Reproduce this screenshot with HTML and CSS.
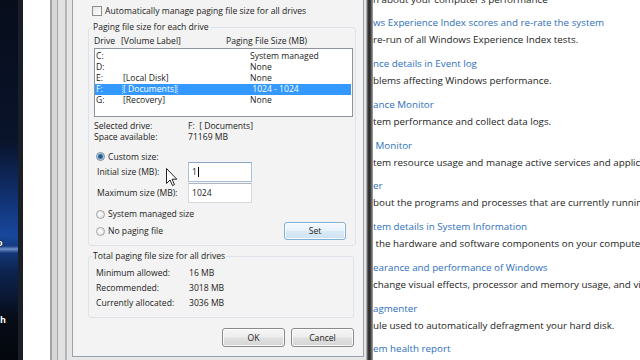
FILE: index.html
```html
<!DOCTYPE html>
<html lang="en">
<head>
    <meta charset="UTF-8">
    <meta name="viewport" content="width=device-width, initial-scale=1.0">
    <title>Virtual Memory</title>
    <link rel="stylesheet" href="styles.css">
</head>
<body>
    <!-- desktop wallpaper with cut-off icon labels -->
    <div class="desktop">
        <span class="icon-label label-top">o</span>
        <span class="icon-label label-bottom">h</span>
    </div>

    <div class="back-window"></div>

    <!-- Performance Information and Tools, advanced tools list -->
    <div class="cp-window">
        <ul class="task-list">
            <li class="task-desc">n about your computer's performance</li>
            <li class="task-link">ws Experience Index scores and re-rate the system</li>
            <li class="task-desc">re-run of all Windows Experience Index tests.</li>
            <li class="task-link">nce details in Event log</li>
            <li class="task-desc">blems affecting Windows performance.</li>
            <li class="task-link">ance Monitor</li>
            <li class="task-desc">tem performance and collect data logs.</li>
            <li class="task-link">&nbsp;Monitor</li>
            <li class="task-desc">tem resource usage and manage active services and applications.</li>
            <li class="task-link">er</li>
            <li class="task-desc">bout the programs and processes that are currently running on your computer.</li>
            <li class="task-link">tem details in System Information</li>
            <li class="task-desc">&nbsp;the hardware and software components on your computer.</li>
            <li class="task-link">earance and performance of Windows</li>
            <li class="task-desc">change visual effects, processor and memory usage, and virtual memory settings.</li>
            <li class="task-link">agmenter</li>
            <li class="task-desc">ule used to automatically defragment your hard disk.</li>
            <li class="task-link">em health report</li>
        </ul>
    </div>

    <!-- Virtual Memory dialog -->
    <div class="vm-dialog">
        <div class="dialog-body">
            <label class="check-row"><span class="checkbox"></span>Automatically manage paging file size for all drives</label>

            <fieldset class="group group-drives">
                <legend>Paging file size for each drive</legend>
                <div class="list-head">
                    <span class="head-drive">Drive</span>
                    <span class="head-label">[Volume Label]</span>
                    <span>Paging File Size (MB)</span>
                </div>
                <div class="drive-list">
                    <div class="drive-row"><span class="col-drive">C:</span><span class="col-label"></span><span>System managed</span></div>
                    <div class="drive-row"><span class="col-drive">D:</span><span class="col-label"></span><span>None</span></div>
                    <div class="drive-row"><span class="col-drive">E:</span><span class="col-label">[Local Disk]</span><span>None</span></div>
                    <div class="drive-row selected"><span class="col-drive">F:</span><span class="col-label"><span class="focus-box">[ Documents]</span></span><span>&nbsp;1024 - 1024</span></div>
                    <div class="drive-row"><span class="col-drive">G:</span><span class="col-label">[Recovery]</span><span>None</span></div>
                </div>

                <div class="info-row"><span class="info-key">Selected drive:</span><span>F:&nbsp; [ Documents]</span></div>
                <div class="info-row"><span class="info-key">Space available:</span><span>71169 MB</span></div>

                <label class="radio-row radio-custom"><span class="radio checked"></span>Custom size:</label>
                <div class="field-row">
                    <span class="field-key">Initial size (MB):</span>
                    <span class="textbox focused">1<span class="caret"></span></span>
                </div>
                <div class="field-row field-max">
                    <span class="field-key">Maximum size (MB):</span>
                    <span class="textbox">1024</span>
                </div>

                <label class="radio-row radio-system"><span class="radio"></span>System managed size</label>
                <div class="radio-set-row">
                    <label class="radio-row"><span class="radio"></span>No paging file</label>
                    <button class="win-button set-button">Set</button>
                </div>
            </fieldset>

            <fieldset class="group group-total">
                <legend>Total paging file size for all drives</legend>
                <div class="total-row"><span class="total-key">Minimum allowed:</span><span>16 MB</span></div>
                <div class="total-row"><span class="total-key">Recommended:</span><span>3018 MB</span></div>
                <div class="total-row"><span class="total-key">Currently allocated:</span><span>3036 MB</span></div>
            </fieldset>

            <div class="dialog-buttons">
                <button class="win-button">OK</button>
                <button class="win-button">Cancel</button>
            </div>
        </div>
    </div>

    <!-- mouse pointer over the dialog -->
    <svg class="pointer" width="12" height="19" viewBox="0 0 12 19">
        <path d="M0.5 0.5 L0.5 15.5 L4 12 L6.5 17.5 L8.5 16.6 L6 11.2 L10.8 11.2 Z" fill="#fff" stroke="#222" stroke-width="1" stroke-linejoin="round"/>
    </svg>
</body>
</html>
```

FILE: styles.css
```css
body {
    margin: 0;
    width: 640px;
    height: 360px;
    position: relative;
    overflow: hidden;
    background-color: #ffffff;
    font-family: 'Open Sans', 'Noto Sans', sans-serif;
    color: #222222;
}

/* Desktop */
.desktop {
    position: absolute;
    left: 0;
    top: 0;
    width: 22px;
    height: 360px;
    background:
        linear-gradient(180deg, transparent 246px, rgba(170, 200, 250, 0.6) 249px, transparent 253px),
        linear-gradient(180deg, #070d1b 0px, #09132a 140px, #12357a 205px, #18479c 235px, #0d2552 270px, #060b16 320px, #04070d 360px);
}

.icon-label {
    position: absolute;
    color: #ffffff;
    font-size: 9px;
    font-weight: bold;
    text-shadow: 0 0 2px #000;
}

.label-top {
    left: -3px;
    top: 236px;
}

.label-bottom {
    left: 0;
    top: 313px;
}

.back-window {
    position: absolute;
    left: 18px;
    top: 0;
    width: 36px;
    height: 360px;
    background-color: #ffffff;
    border-left: 5px solid #1a1e26;
}

/* Control panel behind the dialog */
.cp-window {
    position: absolute;
    left: 372px;
    top: 0;
    width: 268px;
    height: 360px;
    background-color: #ffffff;
    overflow: hidden;
}

.task-list {
    list-style: none;
    margin: -9.5px 0 0 0;
    padding: 0 0 0 1px;
    white-space: nowrap;
    font-size: 9.8px;
}

.task-list li {
    height: 17px;
    line-height: 17px;
}

.task-link {
    color: #2e6fbe;
}

.task-desc {
    color: #1c1c1c;
    margin-bottom: 6.75px;
}

/* Virtual Memory dialog */
.vm-dialog {
    position: absolute;
    left: 50px;
    top: 0;
    width: 316px;
    height: 362px;
    padding-left: 22px;
    padding-right: 2px;
    box-sizing: border-box;
    background: linear-gradient(90deg, #a2a2a2 0 2px, #d8d8d8 2px 7px, #a8a8a8 7px 8px, #e1e1e1 8px 15px, #b6b6b6 15px 17px, #e6e6e6 17px 22px);
}

.vm-dialog::after {
    content: "";
    position: absolute;
    right: -7px;
    top: 0;
    width: 7px;
    height: 100%;
    background: linear-gradient(90deg, #d4d4d4 0, #3a3a3a 2px, #2a2a2a 4px, rgba(60, 60, 60, 0.45) 7px);
}

.dialog-body {
    height: 357px;
    box-sizing: border-box;
    background-color: #f3f3f3;
    border: 1px solid #9aa3ad;
    border-top: none;
    padding: 4px 7px 0 15px;
    font-size: 8.6px;
}

.check-row {
    display: flex;
    align-items: center;
    height: 14px;
    padding-left: 4px;
    gap: 3px;
}

.checkbox {
    width: 8px;
    height: 8px;
    border: 1px solid #8f8f8f;
    background: linear-gradient(135deg, #e6e6e6, #ffffff);
}

.group {
    margin: 3px 0 0 0;
    padding: 0 2px 5px 5px;
    border: 1px solid #dde3e8;
    border-radius: 3px;
    min-width: 0;
}

.group legend {
    padding: 0 1px;
    margin-left: -2px;
    height: 12px;
    line-height: 12px;
}

.list-head {
    display: flex;
    height: 12px;
    line-height: 12px;
    margin-top: 2px;
}

.head-drive {
    width: 27px;
}

.head-label {
    width: 105px;
}

.drive-list {
    margin-top: 1px;
    height: 69px;
    box-sizing: border-box;
    border: 1px solid #8e949c;
    background-color: #ffffff;
    padding: 2px 1px 0 1px;
}

.drive-row {
    display: flex;
    height: 11px;
    line-height: 11px;
}

.drive-row.selected {
    background-color: #3399ff;
    color: #ffffff;
    margin-left: -1px;
    padding-left: 1px;
}

.col-drive {
    width: 27px;
}

.col-label {
    width: 127px;
}

.focus-box {
    outline: 1px dotted rgba(255, 255, 255, 0.55);
}

.info-row {
    display: flex;
    height: 11px;
    line-height: 11px;
}

.drive-list + .info-row {
    margin-top: 4px;
}

.info-key {
    width: 94px;
}

.radio-row {
    display: flex;
    align-items: center;
    gap: 3px;
    padding-left: 2px;
}

.radio {
    width: 7px;
    height: 7px;
    border-radius: 50%;
    border: 1px solid #a3a3a3;
    background: radial-gradient(circle at 40% 40%, #ffffff, #dcdcdc);
}

.radio.checked {
    border-color: #7a8a9a;
    background: radial-gradient(circle, #1f5e96 0 1.8px, #7ea9cf 2.6px, #e4e8ec 3.6px);
}

.radio-custom {
    height: 11px;
    margin-top: 8px;
}

.field-row {
    display: flex;
    align-items: center;
    height: 20px;
    padding-left: 3px;
}

.field-max {
    margin-top: 1px;
}

.field-key {
    width: 91px;
}

.textbox {
    display: flex;
    align-items: center;
    width: 64px;
    height: 20px;
    box-sizing: border-box;
    padding-left: 3px;
    background-color: #ffffff;
    border: 1px solid #d3d7de;
    border-top-color: #b2b6be;
}

.textbox.focused {
    border-color: #a9c2dc;
    border-top-color: #8aa6c4;
}

.caret {
    width: 1px;
    height: 10px;
    background-color: #000000;
    margin-left: 1px;
}

.radio-system {
    height: 12px;
    margin-top: 5px;
}

.radio-set-row {
    display: flex;
    align-items: center;
    height: 18px;
    margin-top: 2px;
}

.win-button {
    font-family: inherit;
    font-size: 8.6px;
    color: #222222;
    height: 19px;
    width: 63px;
    padding: 0;
    border: 1px solid #8a8a8a;
    border-radius: 3px;
    background: linear-gradient(180deg, #f6f6f6 0%, #ededed 48%, #e0e0e0 52%, #d6d6d6 100%);
    box-shadow: inset 0 0 0 1px rgba(255, 255, 255, 0.8);
}

.set-button {
    margin-left: auto;
    margin-right: 7px;
    height: 18px;
    width: 62px;
    border-color: #7fb0d8;
    background: linear-gradient(180deg, #f4f9fd 0%, #e8f2fa 48%, #d9e9f6 52%, #cfe3f3 100%);
}

.group-total {
    margin-top: 4px;
    padding-bottom: 7px;
    margin-right: 2px;
}

.total-row {
    display: flex;
    align-items: center;
    height: 15px;
    padding-left: 2px;
}

.group-total legend + .total-row {
    margin-top: 3px;
}

.total-key {
    width: 93px;
}

.dialog-buttons {
    display: flex;
    justify-content: flex-end;
    gap: 6px;
    margin-top: 10px;
    padding-right: 2px;
}

/* Pointer */
.pointer {
    position: absolute;
    left: 166px;
    top: 168px;
}
```
